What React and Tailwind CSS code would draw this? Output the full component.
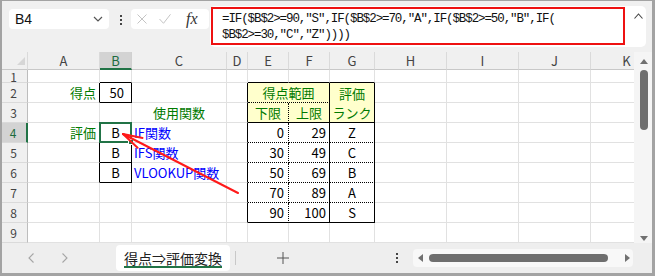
import { Fragment } from 'react'

const cols = ['A', 'B', 'C', 'D', 'E', 'F', 'G', 'H', 'I', 'J', 'K']

const nums = [
  ['0', '29', 'Z'],
  ['30', '49', 'C'],
  ['50', '69', 'B'],
  ['70', '89', 'A'],
  ['90', '100', 'S'],
]
const funcs = ['IF関数', 'IFS関数', 'VLOOKUP関数']

const rows = [
  // row 1
  [{}, { x: 'border-b-black' }, {}, {}, { x: 'border-b-black' }, { x: 'border-b-black' }, { x: 'border-b-black' }, {}, {}, {}, {}],
  // row 2
  [
    { t: '得点', x: 'justify-end pr-[3px] text-[#007a00] border-r-black' },
    { t: '50', x: 'justify-end pr-[7px] border-r-black border-b-black' },
    {},
    { x: 'border-r-black' },
    { t: '得点範囲', x: 'col-span-2 justify-center bg-[#ffffcc] text-[#007a00] border-r-black border-b-black [border-bottom-style:dotted]!' },
    {
      t: (
        <>
          <span className="h-[20px] flex items-center">評価</span>
          <span className="h-[19px] flex items-center">ランク</span>
        </>
      ),
      x: 'row-span-2 flex-col justify-start bg-[#ffffcc] text-[#007a00] border-r-black border-b-black',
    },
    {}, {}, {}, {},
  ],
  // row 3
  [
    {},
    { x: 'border-b-black' },
    { t: '使用関数', x: 'justify-center text-[#007a00]' },
    { x: 'border-r-black' },
    { t: '下限', x: 'justify-center bg-[#ffffcc] text-[#007a00] border-r-black [border-right-style:dotted]! border-b-black' },
    { t: '上限', x: 'justify-center bg-[#ffffcc] text-[#007a00] border-r-black border-b-black' },
    {}, {}, {}, {},
  ],
  // rows 4-8
  ...nums.map((n, i) => {
    const last = i === nums.length - 1
    return [
      i === 0
        ? { t: '評価', x: 'justify-end pr-[3px] text-[#007a00] border-r-black' }
        : i < 3
          ? { x: 'border-r-black' }
          : {},
      i < 3 ? { t: 'B', x: 'justify-center border-r-black border-b-black', sel: i === 0 } : {},
      i < 3 ? { t: funcs[i], x: 'pl-[2px] text-[#0000ff]' } : {},
      { x: 'border-r-black' },
      {
        t: n[0],
        x: last
          ? 'justify-end pr-[4px] border-r-black [border-right-style:dotted]! border-b-black'
          : 'justify-end pr-[4px] border-r-black [border-right-style:dotted]! border-b-black [border-bottom-style:dotted]!',
      },
      {
        t: n[1],
        x: last
          ? 'justify-end pr-[3px] border-r-black border-b-black'
          : 'justify-end pr-[3px] border-r-black border-b-black [border-bottom-style:dotted]!',
      },
      {
        t: n[2],
        x: last
          ? 'justify-center border-r-black border-b-black'
          : 'justify-center border-r-black border-b-black [border-bottom-style:dotted]!',
      },
      {}, {}, {}, {},
    ]
  }),
  // row 9
  [{}, {}, {}, {}, {}, {}, {}, {}, {}, {}, {}],
]

function Cell({ t, x = '', sel }) {
  return (
    <div className={`relative flex items-center whitespace-nowrap border-r border-b border-[#e1e1e1] ${x}`}>
      {t}
      {sel && (
        <div className="absolute -left-[1px] -top-[1px] -right-[1px] -bottom-[1px] border-2 border-[#217346] z-10">
          <div className="absolute -right-[4px] -bottom-[4px] w-[6px] h-[6px] bg-[#217346] border border-white" />
        </div>
      )}
    </div>
  )
}

function Toolbar() {
  return (
    <div className="h-[51px] shrink-0 flex items-start bg-[#f0f0f0]">
      {/* Name box */}
      <div className="mt-[8px] ml-[7px] w-[100px] h-[20px] rounded-[4px] bg-white flex items-center justify-between pl-[6px] pr-[6px]">
        <span className="font-['Liberation_Sans',sans-serif] text-[14px] leading-none text-[#111]">B4</span>
        <svg width="10" height="6" viewBox="0 0 10 6">
          <path d="M1 1l4 4 4-4" fill="none" stroke="#555" strokeWidth="1.2" />
        </svg>
      </div>

      <div className="mt-[14px] ml-[11px] w-[2px] flex flex-col gap-[2px]">
        <span className="w-[2px] h-[2px] bg-[#444]" />
        <span className="w-[2px] h-[2px] bg-[#444]" />
        <span className="w-[2px] h-[2px] bg-[#444]" />
      </div>

      {/* cancel / enter / fx */}
      <div className="mt-[8px] ml-[9px] w-[78px] h-[20px] rounded-[4px] bg-white flex items-center pl-[6px]">
        <svg width="10" height="10" viewBox="0 0 10 10">
          <path d="M0.5 0.5l9 9M9.5 0.5l-9 9" stroke="#c4c4c4" strokeWidth="1" />
        </svg>
        <svg className="ml-[12px]" width="12" height="10" viewBox="0 0 12 10">
          <path d="M0.5 5l4 4.3 7-9" fill="none" stroke="#c4c4c4" strokeWidth="1" />
        </svg>
        <span className="ml-[15px] font-['Liberation_Serif',serif] italic text-[16px] leading-none text-[#333]">fx</span>
      </div>

      {/* formula */}
      <div className="mt-[5px] ml-[1px] w-[436px] h-[41px] rounded-[5px] bg-white flex items-start">
        <div className="mt-[1px] ml-[1px] w-[414px] h-[38px] border-2 border-[#ee1111] pl-[9px] pt-[2px] font-['Liberation_Mono',monospace] text-[12.5px] leading-[16px] tracking-[-1.1px] text-[#111] whitespace-nowrap">
          <div>{'=IF($B$2>=90,"S",IF($B$2>=70,"A",IF($B$2>=50,"B",IF('}</div>
          <div>{'$B$2>=30,"C","Z"))))'}</div>
        </div>
        <svg className="ml-[9px] mt-[7px]" width="9" height="6" viewBox="0 0 9 6">
          <path d="M0.5 5.5l4-4.5 4 4.5" fill="none" stroke="#444" strokeWidth="1.1" />
        </svg>
      </div>
    </div>
  )
}

function Sheet() {
  return (
    <div className="grid w-max grid-cols-[26px_72px_32px_95px_21px_41px_41px_45px_72px_72px_72px_72px] grid-rows-[18px_13px_repeat(8,20px)] text-[13px] leading-none text-black">
      <div className="flex items-end justify-end pr-[2px] pb-[4px] bg-[#f0f0f0] border-r border-b border-r-[#dadada] border-b-[#c8c8c8]">
        <svg width="8" height="8" viewBox="0 0 8 8">
          <polygon points="8,0 8,8 0,8" fill="#d6d6d6" />
        </svg>
      </div>
      {cols.map((c) => (
        <div
          key={c}
          className={
            c === 'B'
              ? 'flex items-center justify-center bg-[#d3d3d3] text-[#1d6b3f] border-r border-r-[#d0d0d0] border-b-2 border-b-[#217346]'
              : 'flex items-center justify-center bg-[#f0f0f0] text-[#444] border-r border-b border-r-[#dadada] border-b-[#c8c8c8]'
          }
        >
          {c}
        </div>
      ))}
      {rows.map((cells, ri) => (
        <Fragment key={ri}>
          <div
            className={
              ri === 3
                ? 'flex items-center justify-center pr-[2px] text-[12px] leading-[11px] bg-[#d3d3d3] text-[#1d6b3f] border-b border-b-[#dadada] border-r-2 border-r-[#217346]'
                : 'flex items-center justify-center pr-[2px] text-[12px] leading-[11px] bg-[#f0f0f0] text-[#444] border-b border-b-[#dadada] border-r border-r-[#bdbdbd]'
            }
          >
            {ri + 1}
          </div>
          {cells.map((c, ci) => (
            <Cell key={ci} {...c} />
          ))}
        </Fragment>
      ))}
    </div>
  )
}

function VScroll() {
  return (
    <div className="w-[18px] bg-[#f5f5f5] flex flex-col items-center pl-[1px] pt-[7px] pb-[2px]">
      <svg width="8" height="5" viewBox="0 0 8 5">
        <polygon points="4,0 8,5 0,5" fill="#707070" />
      </svg>
      <div className="mt-[6px] w-[8px] h-[60px] rounded-full bg-[#6e6e6e]" />
      <div className="flex-1" />
      <svg width="8" height="5" viewBox="0 0 8 5">
        <polygon points="0,0 8,0 4,5" fill="#707070" />
      </svg>
    </div>
  )
}

function TabBar() {
  return (
    <div className="h-[30px] shrink-0 bg-[#eeeeee] flex items-center">
      <svg className="ml-[26px]" width="6" height="10" viewBox="0 0 6 10">
        <path d="M5.5 0.5L1 5l4.5 4.5" fill="none" stroke="#a5a5a5" strokeWidth="1.1" />
      </svg>
      <svg className="ml-[28px]" width="6" height="10" viewBox="0 0 6 10">
        <path d="M0.5 0.5L5 5 0.5 9.5" fill="none" stroke="#a5a5a5" strokeWidth="1.1" />
      </svg>

      <div className="ml-[48px] w-[114px] h-[26px] rounded-[4px] bg-white flex justify-center items-start pt-[6px]">
        <span className="text-[14px] leading-[15px] text-[#222] border-b-2 border-[#217346]">得点⇒評価変換</span>
      </div>
      <div className="ml-[5px] w-px h-[14px] bg-[#c8c8c8]" />

      <svg className="ml-[41px]" width="12" height="12" viewBox="0 0 12 12">
        <path d="M6 0v12M0 6h12" stroke="#555" strokeWidth="1" />
      </svg>

      <div className="ml-[107px] w-[2px] flex flex-col gap-[2px]">
        <span className="w-[2px] h-[2px] bg-[#444]" />
        <span className="w-[2px] h-[2px] bg-[#444]" />
        <span className="w-[2px] h-[2px] bg-[#444]" />
      </div>

      <div className="ml-[15px] w-[220px] h-[18px] rounded-[4px] bg-[#f8f8f8] flex items-center">
        <svg className="ml-[5px]" width="5" height="8" viewBox="0 0 5 8">
          <polygon points="5,0 5,8 0,4" fill="#707070" />
        </svg>
        <div className="ml-[6px] w-[179px] h-[8px] rounded-full bg-[#6e6e6e]" />
        <div className="flex-1" />
        <svg className="mr-[3px]" width="5" height="8" viewBox="0 0 5 8">
          <polygon points="0,0 5,4 0,8" fill="#707070" />
        </svg>
      </div>
    </div>
  )
}

export default function App() {
  return (
    <div className="w-[655px] h-[276px] overflow-hidden border-t border-l-2 border-r-[3px] border-b-[3px] border-[#a3a3a3] font-['Noto_Sans_CJK_JP',sans-serif]">
      <div className="w-[650px] h-[272px] flex flex-col bg-[#f0f0f0]">
        <Toolbar />
        <div className="h-[191px] flex">
          <div className="relative w-[632px] overflow-hidden bg-white">
            <Sheet />
            {/* annotation arrow */}
            <svg className="absolute left-0 top-0 z-20 pointer-events-none" width="632" height="191">
              <g stroke="#ff1a1a" strokeWidth="2" strokeLinecap="round" fill="none">
                <line x1="236" y1="141" x2="121" y2="82" />
                <line x1="121" y1="82" x2="140.6" y2="85.9" />
                <line x1="121" y1="82" x2="135.6" y2="95.7" />
              </g>
            </svg>
          </div>
          <VScroll />
        </div>
        <TabBar />
      </div>
    </div>
  )
}
